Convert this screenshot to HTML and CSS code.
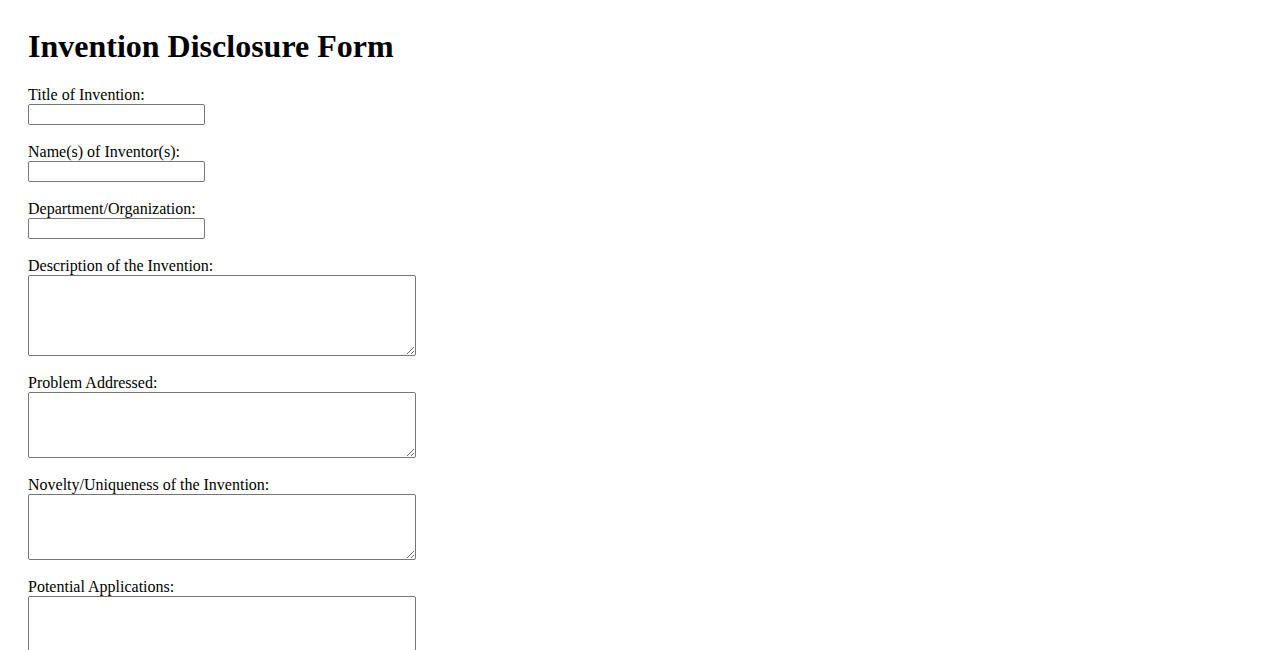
FILE: index.html
```
<!DOCTYPE html>
<html lang="en">
<head>
<meta charset="utf-8">
<title>Invention Disclosure Form</title>
<link rel="stylesheet" href="styles.css">
</head>
<body>
<h1 class="title">Invention Disclosure Form</h1>
<form class="form">
  <div class="field">
    <label class="label" for="title">Title of Invention:</label>
    <input class="text" type="text" id="title">
  </div>
  <div class="field">
    <label class="label" for="inventors">Name(s) of Inventor(s):</label>
    <input class="text" type="text" id="inventors">
  </div>
  <div class="field">
    <label class="label" for="dept">Department/Organization:</label>
    <input class="text" type="text" id="dept">
  </div>
  <div class="field">
    <label class="label" for="desc">Description of the Invention:</label>
    <textarea class="area area-lg" id="desc"></textarea>
  </div>
  <div class="field">
    <label class="label" for="problem">Problem Addressed:</label>
    <textarea class="area" id="problem"></textarea>
  </div>
  <div class="field">
    <label class="label" for="novelty">Novelty/Uniqueness of the Invention:</label>
    <textarea class="area" id="novelty"></textarea>
  </div>
  <div class="field">
    <label class="label" for="apps">Potential Applications:</label>
    <textarea class="area area-lg" id="apps"></textarea>
  </div>
</form>
</body>
</html>
```
FILE: styles.css
```
html, body {
  background: #fff;
}
body {
  margin: 0;
  padding: 28px;
  font-family: "Liberation Serif", "Times New Roman", serif;
  font-size: 16px;
  color: #000;
}
.title {
  margin: 0 0 21px;
  font-size: 32px;
  font-weight: bold;
  line-height: 37px;
}
.field {
  margin-bottom: 18px;
}
.label {
  display: block;
  line-height: 18px;
  height: 18px;
}
.text {
  display: block;
  box-sizing: border-box;
  width: 177px;
  height: 21px;
  margin: 0;
  border: 1px solid #767676;
  border-radius: 2px;
  padding: 1px 2px;
  font-family: "Liberation Sans", Arial, sans-serif;
  font-size: 13.33px;
  background: #fff;
}
.area {
  display: block;
  box-sizing: border-box;
  width: 388px;
  height: 66px;
  margin: 0;
  border: 1px solid #767676;
  border-radius: 2px;
  padding: 2px;
  font-family: "Liberation Mono", monospace;
  font-size: 13.33px;
  background: #fff;
}
.area-lg {
  height: 81px;
}
```
